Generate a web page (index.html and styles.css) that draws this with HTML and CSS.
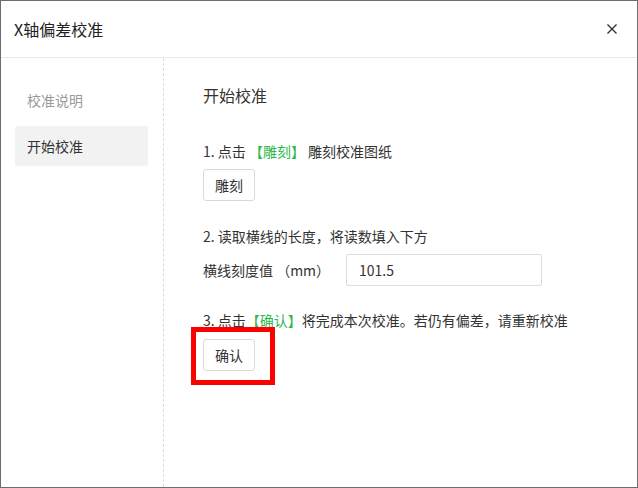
FILE: index.html
```html
<!DOCTYPE html>
<html lang="zh">
<head>
<meta charset="utf-8">
<link rel="stylesheet" href="styles.css">
</head>
<body>
<div class="dialog">
  <div class="header">
    <div class="title">X轴偏差校准</div>
    <svg class="close" width="10" height="10" viewBox="0 0 10 10"><path d="M0.5 0.5L9.5 9.5M9.5 0.5L0.5 9.5" stroke="#333" stroke-width="1.4" fill="none"/></svg>
  </div>
  <div class="body">
    <div class="sidebar">
      <div class="nav-item">校准说明</div>
      <div class="nav-item active">开始校准</div>
    </div>
    <div class="main">
      <div class="heading">开始校准</div>
      <div class="step step-first">1. 点击 <span class="green">【雕刻】</span> 雕刻校准图纸</div>
      <button class="btn">雕刻</button>
      <div class="step">2. 读取横线的长度，将读数填入下方</div>
      <div class="field">
        <span class="label">横线刻度值 （mm）</span>
        <div class="input">101.5</div>
      </div>
      <div class="step step-third">3. 点击<span class="green">【确认】</span>将完成本次校准。若仍有偏差，请重新校准</div>
      <div class="highlight-wrap">
        <button class="btn">确认</button>
        <span class="highlight"></span>
      </div>
    </div>
  </div>
</div>
</body>
</html>
```
FILE: styles.css
```css
* { box-sizing: border-box; }
html, body { margin: 0; padding: 0; background: #fff; }
body {
  font-family: "Noto Sans CJK SC", "Noto Sans", sans-serif;
  color: #333;
  font-size: 14px;
}
.dialog {
  width: 638px;
  height: 488px;
  border: 1px solid #6d6d6d;
  display: flex;
  flex-direction: column;
}
.header {
  height: 57px;
  flex: none;
  border-bottom: 1px solid #e8e8e8;
  display: flex;
  align-items: center;
  justify-content: space-between;
  padding: 0 20px 0 13px;
}
.title {
  font-size: 16px;
  line-height: 24px;
  color: #222;
}
.close { display: block; }
.body {
  flex: 1;
  display: flex;
}
.sidebar {
  width: 163px;
  flex: none;
  border-right: 1px dashed #dadada;
  padding: 22px 15px 0 14px;
  display: flex;
  flex-direction: column;
  gap: 6px;
}
.nav-item {
  height: 40px;
  line-height: 40px;
  padding-left: 12px;
  color: #999;
  border-radius: 2px;
}
.nav-item.active {
  background: #f2f2f2;
  color: #333;
}
.main {
  flex: 1;
  padding: 25px 0 0 39px;
  display: flex;
  flex-direction: column;
  align-items: flex-start;
}
.heading {
  font-size: 16px;
  line-height: 24px;
}
.step {
  line-height: 22px;
  margin-top: 24px;
}
.step-first { margin-top: 33px; }
.step-third { margin-top: 23px; }
.green { color: #2fb84c; }
.btn {
  margin-top: 7px;
  width: 52px;
  height: 32px;
  border: 1px solid #d9d9d9;
  border-radius: 3px;
  background: #fff;
  font-family: inherit;
  font-size: 14px;
  color: #333;
  padding: 0;
}
.field {
  margin-top: 7px;
  display: flex;
  align-items: center;
}
.label {
  width: 143px;
  flex: none;
}
.input {
  width: 196px;
  height: 32px;
  border: 1px solid #dcdcdc;
  border-radius: 2px;
  padding-left: 12px;
  line-height: 30px;
}
.highlight-wrap {
  position: relative;
  margin-top: 1px;
}
.highlight {
  position: absolute;
  left: -12px;
  top: -5px;
  width: 84px;
  height: 58px;
  border: 5px solid #ff0000;
}
```
